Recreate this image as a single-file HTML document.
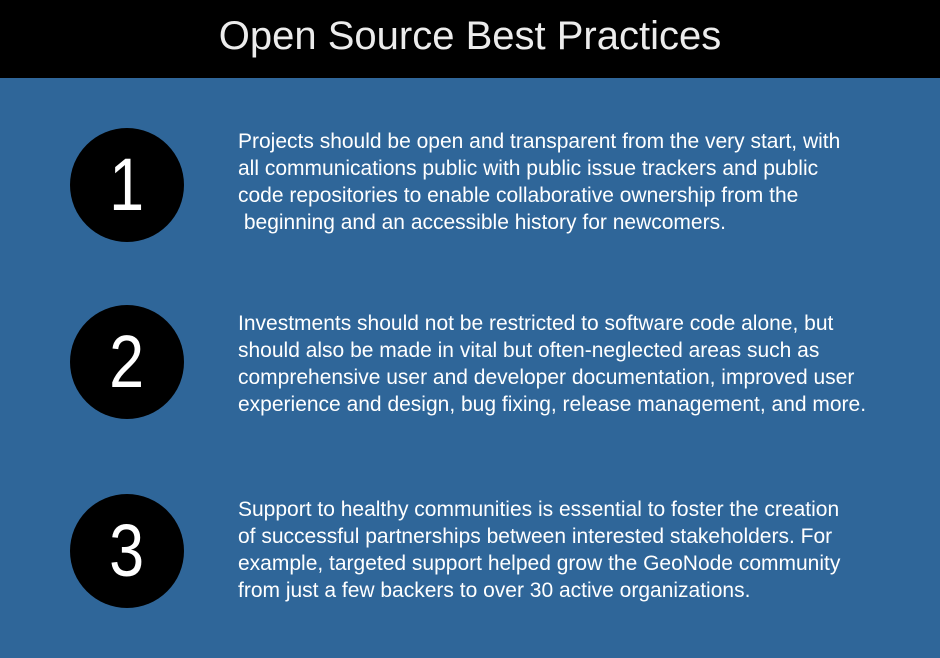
<!DOCTYPE html>
<html><head><meta charset="utf-8"><style>
body{margin:0;width:940px;height:658px;background:#2f6699;font-family:"Liberation Sans",sans-serif;position:relative;overflow:hidden}
.hd{position:absolute;left:0;top:0;width:940px;height:78px;background:#000;color:#ececec;font-size:40px;text-align:center;line-height:72px}
.c{position:absolute;left:70px;width:114px;height:114px;border-radius:50%;background:#000;color:#fff;font-size:74px;text-align:center;line-height:114px}
.c span{display:inline-block;transform:scaleX(0.85)}
.p{position:absolute;left:238px;color:#fff;font-size:21px;line-height:27px;white-space:nowrap}
</style></head><body>
<div class="hd">Open Source Best Practices</div>
<div class="c" style="top:128px"><span>1</span></div>
<div class="c" style="top:305px"><span>2</span></div>
<div class="c" style="top:494px"><span>3</span></div>
<div class="p" style="top:128px">Projects should be open and transparent from the very start, with<br>all communications public with public issue trackers and public<br>code repositories to enable collaborative ownership from the<br>&nbsp;beginning and an accessible history for newcomers.</div>
<div class="p" style="top:310px">Investments should not be restricted to software code alone, but<br>should also be made in vital but often-neglected areas such as<br>comprehensive user and developer documentation, improved user<br>experience and design, bug fixing, release management, and more.</div>
<div class="p" style="top:496px">Support to healthy communities is essential to foster the creation<br>of successful partnerships between interested stakeholders. For<br>example, targeted support helped grow the GeoNode community<br>from just a few backers to over 30 active organizations.</div>
</body></html>
